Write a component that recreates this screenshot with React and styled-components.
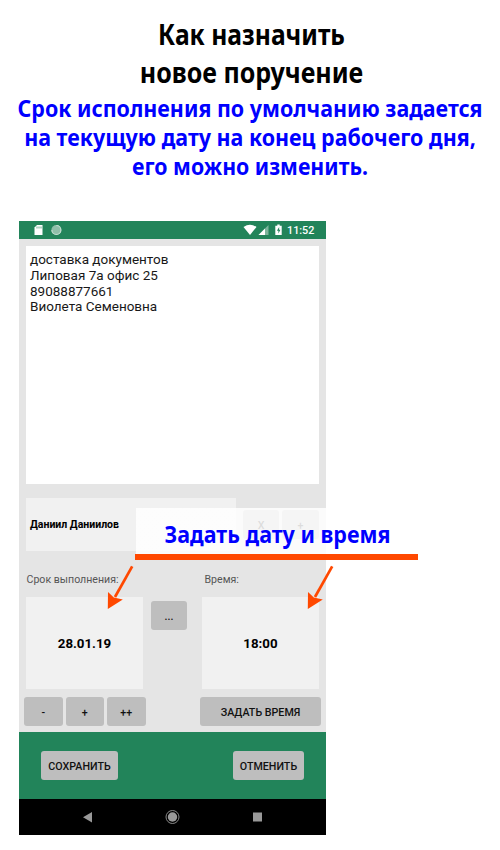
import React from "react";
import styled, { createGlobalStyle } from "styled-components";

const GlobalStyle = createGlobalStyle`
  * { box-sizing: border-box; }
  body { margin: 0; background: #fff; }
`;

const Page = styled.main`
  position: relative;
  width: 500px;
  height: 850px;
  overflow: hidden;
  background: #fff;
  font-family: Roboto, "Liberation Sans", sans-serif;
  color: #111;
`;

const Headings = styled.header`
  height: 221px;
  padding-top: 15px;
  font-family: "Noto Sans", "Open Sans", sans-serif;
  font-weight: 700;
  text-align: center;
`;

const Title = styled.h1`
  margin: 0;
  padding-left: 3px;
  font-size: 29px;
  line-height: 38px;
  color: #000;
`;

const Subtitle = styled.p`
  margin: 3px 0 0;
  font-size: 23px;
  line-height: 29px;
  color: #0000ff;
`;

const Line = styled.span`
  display: block;
  white-space: nowrap;
  transform: scaleX(${(p) => p.$stretch || 1});
`;

const Phone = styled.section`
  display: flex;
  flex-direction: column;
  width: 307px;
  height: 614px;
  margin-left: 19px;
  background: #e5e5e5;
`;

const StatusBar = styled.div`
  display: flex;
  flex: none;
  height: 18px;
  background: #22845a;
`;

const StatusIcons = styled.svg`
  display: block;
  width: 263px;
  height: 18px;
`;

const Clock = styled.span`
  padding-left: 5px;
  font-size: 10.8px;
  font-weight: 500;
  line-height: 19px;
  color: #fff;
`;

const Form = styled.div`
  flex: none;
  height: 493px;
  padding: 7px 7px 0;
`;

const TaskText = styled.div`
  height: 238px;
  padding: 6px 4px;
  background: #fff;
  font-size: 13.5px;
  line-height: 15.75px;
  white-space: pre-line;
  color: #181818;
`;

const Assignee = styled.div`
  display: flex;
  margin-top: 14px;
  height: 53px;
`;

const AssigneeName = styled.div`
  width: 210px;
  padding-left: 4px;
  background: #f1f1f1;
  font-size: 10.5px;
  font-weight: 700;
  line-height: 54px;
  color: #000;
`;

const AssigneeActions = styled.div`
  display: flex;
  gap: 3px;
  padding: 12px 0 0 7px;
`;

const Button = styled.button`
  display: flex;
  align-items: center;
  justify-content: center;
  width: ${(p) => p.$w}px;
  height: 29px;
  padding: 1px 0 0;
  border: 0;
  border-radius: 3px;
  background: #bebebe;
  font: 500 10.7px Roboto, "Liberation Sans", sans-serif;
  color: #111;
  white-space: nowrap;
`;

const Labels = styled.div`
  display: grid;
  grid-template-columns: 178px 1fr;
  margin-top: 21px;
  height: 15px;
  padding-left: 0.5px;
  font-size: 10.6px;
  line-height: 15px;
  color: #555;
`;

const Values = styled.div`
  display: flex;
  justify-content: space-between;
  margin-top: 10px;
  height: 92px;
`;

const ValueBox = styled.div`
  width: 117px;
  height: 92px;
  background: #f1f1f1;
  font-size: 13.3px;
  font-weight: 700;
  line-height: 93px;
  text-align: center;
  color: #000;
`;

const MoreSlot = styled.div`
  padding: 4px 7px 0 0;
`;

const Steppers = styled.div`
  display: flex;
  gap: 3px;
  margin: 8px -2px 0;
`;

const Spacer = styled.div`
  flex: 1;
`;

const Footer = styled.div`
  display: flex;
  justify-content: space-between;
  flex: none;
  height: 67px;
  padding: 19px 22px 0;
  background: #22845a;
`;

const NavBar = styled.svg`
  display: block;
  flex: none;
  width: 307px;
  height: 36px;
  background: #000;
`;

const Callout = styled.div`
  position: absolute;
  left: 135px;
  top: 508px;
  width: 283px;
  height: 52px;
  padding-left: 2px;
  border-bottom: 6px solid #ff4800;
  background: linear-gradient(rgba(255, 255, 255, 0.85), rgba(255, 255, 255, 0.85)) 1px 0 no-repeat;
  font: 700 23px/52px "Noto Sans", "Open Sans", sans-serif;
  text-align: center;
  color: #0000ff;
`;

const ArrowSvg = styled.svg`
  position: absolute;
  left: ${(p) => p.$x}px;
  top: 564px;
  width: 30px;
  height: 48px;
`;

const Arrow = ({ x }) => (
  <ArrowSvg $x={x} viewBox="0 0 30 48">
    <path d="M26.2 2.3 9 33" stroke="#ff4800" strokeWidth="2.7" />
    <path d="M1.800 45 2 28 7.800 33.500 16.800 35.500Z" fill="#ff4800" />
  </ArrowSvg>
);

export default function App() {
  return (
    <>
      <GlobalStyle />
      <Page>
        <Headings>
          <Title>
            <Line $stretch={0.85}>Как назначить</Line>
            <Line $stretch={0.864}>новое поручение</Line>
          </Title>
          <Subtitle>
            <Line $stretch={0.932}>Срок исполнения по умолчанию задается</Line>
            <Line $stretch={0.932}>на текущую дату на конец рабочего дня,</Line>
            <Line $stretch={0.925}>его можно изменить.</Line>
          </Subtitle>
        </Headings>
        <Phone>
          <StatusBar>
            <StatusIcons viewBox="0 0 263 18">
              <path d="M18 4h5.500v10h-8V6.500Z" fill="#fff" />
              <path d="M18 5.500v2M20 5.500v2M22 5.500v2" stroke="#22845a" strokeWidth="0.7" />
              <circle cx="37.400" cy="9" r="5" fill="#8fbfa9" />
              <path d="M37.400 4.500a4.500 4.500 0 1 1-4.500 4.500" fill="none" stroke="#c4ded2" strokeWidth="1.1" />
              <path d="M224.500 6q6.500-4.500 13 0L231 14Z" fill="#fff" />
              <path d="M239.500 14 249.500 4v10Z" fill="#7db59c" />
              <path d="M239.500 14 246 7.500V14Z" fill="#fff" />
              <path d="M258.300 3.500h2.400v1.200h2v9.300h-6.400V4.700h2Z" fill="#fff" />
              <path d="m260.200 6-2.300 3.800h1.500v2.700l2-3.700h-1.300Z" fill="#22845a" />
            </StatusIcons>
            <Clock>11:52</Clock>
          </StatusBar>
          <Form>
            <TaskText>{"доставка документов\nЛиповая 7а офис 25\n89088877661\nВиолета Семеновна"}</TaskText>
            <Assignee>
              <AssigneeName>Даниил Даниилов</AssigneeName>
              <AssigneeActions>
                <Button $w={36}>X</Button>
                <Button $w={37}>+</Button>
              </AssigneeActions>
            </Assignee>
            <Labels>
              <span>Срок выполнения:</span>
              <span>Время:</span>
            </Labels>
            <Values>
              <ValueBox>28.01.19</ValueBox>
              <MoreSlot>
                <Button $w={36}>...</Button>
              </MoreSlot>
              <ValueBox>18:00</ValueBox>
            </Values>
            <Steppers>
              <Button $w={38.5}>-</Button>
              <Button $w={38.5}>+</Button>
              <Button $w={38.5}>++</Button>
              <Spacer />
              <Button $w={121}>ЗАДАТЬ ВРЕМЯ</Button>
            </Steppers>
          </Form>
          <Footer>
            <Button $w={77}>СОХРАНИТЬ</Button>
            <Button $w={71}>ОТМЕНИТЬ</Button>
          </Footer>
          <NavBar viewBox="0 0 307 36">
            <path d="M64 18.300 73 13v10.500Z" fill="#999" />
            <circle cx="153.500" cy="18" r="6.500" fill="none" stroke="#999" strokeWidth="0.9" />
            <circle cx="153.500" cy="18" r="4.700" fill="#999" />
            <rect x="234" y="13.500" width="9" height="9" fill="#999" />
          </NavBar>
        </Phone>
        <Callout>
          <Line $stretch={0.934}>Задать дату и время</Line>
        </Callout>
        <Arrow x={106} />
        <Arrow x={306} />
      </Page>
    </>
  );
}
